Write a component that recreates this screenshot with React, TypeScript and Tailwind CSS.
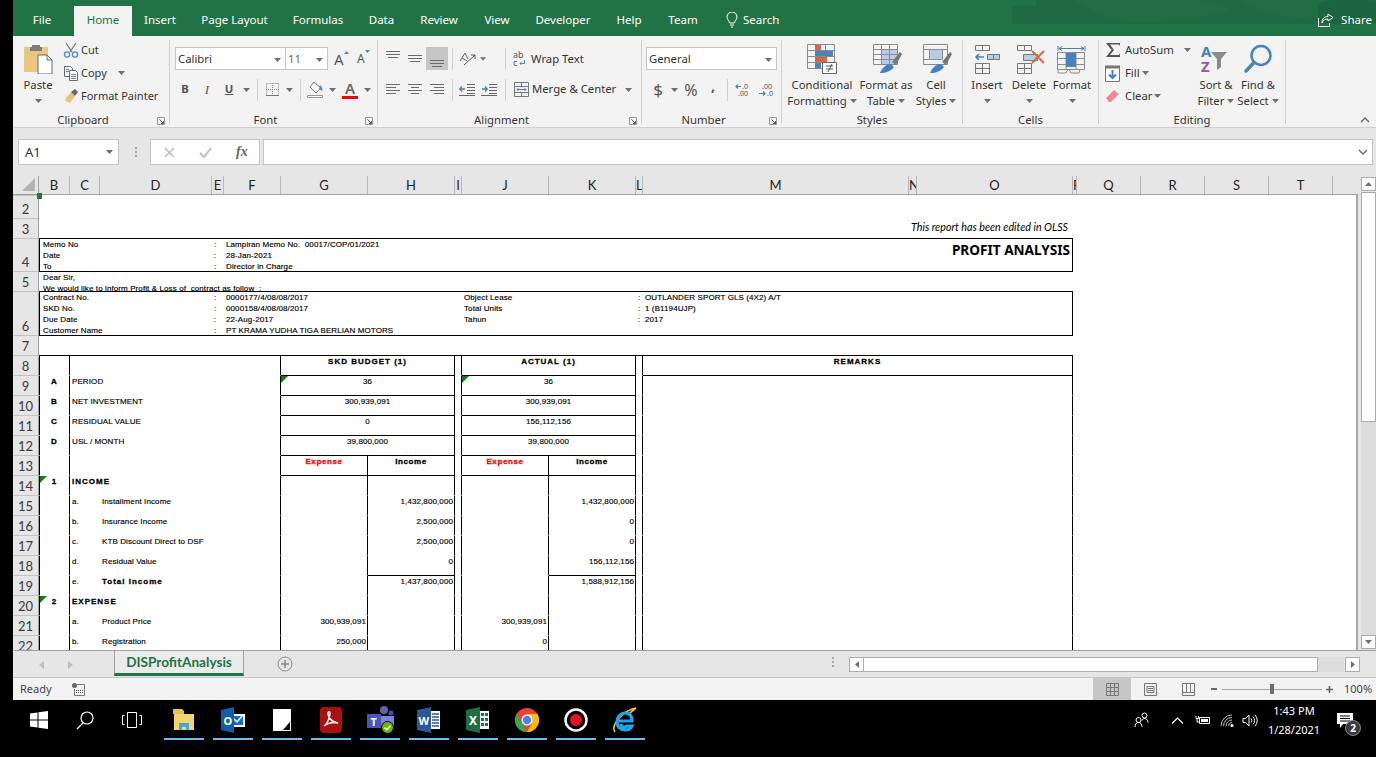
import React from 'react';

type Kids = { children?: React.ReactNode; className?: string };

const Caret = ({ className = '' }: { className?: string }) => (
  <svg width="7" height="4" viewBox="0 0 7 4" className={className}>
    <path d="M0 0h7L3.5 4z" fill="#6e6e6e" />
  </svg>
);

const Sep = ({ className = '' }: { className?: string }) => (
  <div className={`flex justify-center ${className}`}>
    <div className="h-[22px] w-px bg-[#d0d0d0]" />
  </div>
);

const Launcher = () => (
  <svg width="8" height="8" viewBox="0 0 8 8">
    <path d="M.5.5h7v7h-7z" fill="none" stroke="#9a9a9a" />
    <path d="M2.5 2.5l4 4M6.5 4v2.5H4" fill="none" stroke="#555" />
  </svg>
);

const Group = ({ className = '', label, launcher, children }: Kids & { label: string; launcher?: boolean }) => (
  <div className={`mt-[4px] flex h-[84px] flex-col border-r border-[#d0d0d0] ${className}`}>
    <div className="h-[72px]">{children}</div>
    <div className="flex h-[12px] items-start leading-[16px]">
      <div className="flex-1 text-center">{label}</div>
      {launcher && (
        <div className="flex h-[16px] w-[16px] items-center justify-center pt-[2px]">
          <Launcher />
        </div>
      )}
    </div>
  </div>
);

const Big = ({ className = '', icon, a, b }: { className?: string; icon: React.ReactNode; a: string; b?: string }) => (
  <div className={`flex flex-col items-center pt-[4px] ${className}`}>
    <div className="flex h-[30px] items-center justify-center">{icon}</div>
    <div className="mt-[3px] whitespace-nowrap leading-[16px]">{a}</div>
    <div className="flex h-[16px] items-center gap-[3px] whitespace-nowrap leading-[16px]">
      {b && <span>{b}</span>}
      <Caret />
    </div>
  </div>
);

const Lines = ({ rows, color = '#6a6a6a' }: { rows: number[][]; color?: string }) => (
  <svg width="22" height="23" viewBox="0 0 22 23">
    {rows.map((r, i) => (
      <path key={i} d={`M${r[0]} ${r[2]}.5H${r[1]}`} stroke={color} fill="none" />
    ))}
  </svg>
);

const Ribbon = () => (
  <div className="flex h-[92px] border-b border-[#d0d0d0] bg-[#f3f3f3] text-[11.3px] text-[#333]">
    <Group className="w-[157px]" label="Clipboard" launcher>
      <div className="flex">
        <div className="ml-[8px] flex w-[34px] flex-col items-center pt-[4px]">
          <svg width="30" height="30" viewBox="0 0 30 30">
            <path d="M1 3h24v25H1z" fill="#e9c781" />
            <path d="M9 3V1h8v2h2v4H7V3z" fill="#7d7d7d" />
            <path d="M15 11h9l5 5v14H15z" fill="#fff" stroke="#6a6a6a" />
            <path d="M24 11v5h5" fill="none" stroke="#6a6a6a" />
          </svg>
          <div className="mt-[3px] leading-[16px]">Paste</div>
          <div className="flex h-[16px] items-center">
            <Caret />
          </div>
        </div>
        <div className="ml-[8px] flex flex-col gap-[3px] text-[11px]">
          <div className="flex h-[20px] items-center gap-[2px]">
            <svg width="16" height="16" viewBox="0 0 16 16" fill="none">
              <path d="M3 1l6 9M13 1L7 10" stroke="#777" strokeWidth="1.3" />
              <circle cx="4" cy="12.5" r="2.6" stroke="#4c8bc8" strokeWidth="1.3" />
              <circle cx="12" cy="12.5" r="2.6" stroke="#4c8bc8" strokeWidth="1.3" />
            </svg>
            <span>Cut</span>
          </div>
          <div className="flex h-[20px] items-center gap-[2px]">
            <svg width="16" height="16" viewBox="0 0 16 16" fill="none" stroke="#6a6a6a">
              <path d="M1.5 1.5h6l2 2v8h-8z" fill="#f3f3f3" />
              <path d="M6.5 5.5h6l2 2v8h-8z" fill="#fff" />
              <path d="M8 9.5h5M8 11.5h5M8 13.5h5M3 4.5h3M3 6.5h3" stroke="#4c8bc8" />
            </svg>
            <span>Copy</span>
            <Caret className="ml-[9px]" />
          </div>
          <div className="flex h-[20px] items-center gap-[2px]">
            <svg width="16" height="16" viewBox="0 0 16 16">
              <path d="M8 4l4 4-5 7-6-3 3-1-2-1 3-2z" fill="#e5c27a" />
              <path d="M8 4l4-3 3 3-3 4z" fill="#666" />
            </svg>
            <span>Format Painter</span>
          </div>
        </div>
      </div>
    </Group>

    <Group className="w-[208px]" label="Font" launcher>
      <div className="ml-[5px] mt-[7px] flex h-[23px] items-center">
        <div className="flex h-[23px] w-[111px] items-center justify-between border border-[#c6c6c6] bg-white pl-[2px] pr-[4px] pt-[2px]">
          <span>Calibri</span>
          <Caret />
        </div>
        <div className="-ml-px flex h-[23px] w-[43px] items-center justify-between border border-[#c6c6c6] bg-white pl-[2px] pr-[4px] pt-[2px] text-[#5b6b80]">
          <span>11</span>
          <Caret />
        </div>
        <div className="ml-[6px] flex w-[20px] items-start">
          <span className="text-[15px] leading-[18px] text-[#555]">A</span>
          <svg width="5" height="3" viewBox="0 0 5 3" className="mt-[1px]"><path d="M0 3h5L2.5 0z" fill="#4c8bc8" /></svg>
        </div>
        <div className="ml-[3px] flex w-[18px] items-start">
          <span className="pt-[1px] text-[12px] leading-[18px] text-[#555]">A</span>
          <svg width="5" height="3" viewBox="0 0 5 3" className="mt-[1px]"><path d="M0 0h5L2.5 3z" fill="#4c8bc8" /></svg>
        </div>
      </div>
      <div className="ml-[4px] mt-[8px] flex h-[23px] items-center text-[#555]">
        <div className="w-[22px] text-center font-bold">B</div>
        <div className="w-[22px] text-center font-['Liberation_Serif'] text-[13px] italic">I</div>
        <div className="w-[22px] text-center font-bold underline">U</div>
        <div className="flex w-[12px] justify-center"><Caret /></div>
        <Sep className="w-[10px]" />
        <div className="flex w-[20px] justify-center">
          <svg width="13" height="13" viewBox="0 0 13 13" fill="none">
            <path d="M.5.5h12v12H.5zM6.5 0v13M0 6.5h13" stroke="#888" strokeDasharray="1 1" />
            <path d="M0 12.5h13" stroke="#777" />
          </svg>
        </div>
        <div className="flex w-[14px] justify-center"><Caret /></div>
        <Sep className="w-[8px]" />
        <div className="flex w-[24px] justify-center">
          <svg width="18" height="17" viewBox="0 0 18 17" fill="none">
            <path d="M7 1l7 6-5 5-6-6z" fill="#fff" stroke="#777" />
            <path d="M13 4c2 2 3 4 2 6-1-1-2-1-3-2z" fill="#4c8bc8" />
            <path d="M.5 14.5h15v2H.5z" fill="#fff" stroke="#999" />
          </svg>
        </div>
        <div className="flex w-[8px] justify-center"><Caret /></div>
        <div className="ml-[3px] flex h-[18px] w-[22px] flex-col items-center">
          <span className="h-[14px] text-[15px] font-semibold leading-[15px] text-[#666]">A</span>
          <div className="mt-[1px] h-[4px] w-[16px] bg-[#ff0000]" />
        </div>
        <div className="flex w-[12px] justify-center"><Caret /></div>
      </div>
    </Group>

    <Group className="w-[264px]" label="Alignment" launcher>
      <div className="ml-[4px] mt-[7px] flex h-[23px] items-center">
        <Lines rows={[[4, 18, 4], [4, 18, 7], [6, 16, 10]]} />
        <Lines rows={[[4, 18, 8], [4, 18, 11], [6, 16, 14]]} />
        <div className="bg-[#c6c6c6]">
          <Lines rows={[[4, 18, 13], [4, 18, 16], [6, 16, 19]]} />
        </div>
        <Sep className="w-[8px]" />
        <div className="flex w-[24px] justify-center">
          <svg width="18" height="14" viewBox="0 0 18 14" fill="none" stroke="#666">
            <path d="M1 9l5-8 3 6M3 6l5 3" />
            <path d="M5 13L16 3M12 3h4v4" stroke="#555" />
          </svg>
        </div>
        <div className="flex w-[6px] justify-center"><Caret /></div>
        <Sep className="ml-[14px] w-[10px]" />
        <div className="ml-[3px] flex h-[20px] w-[18px] items-center gap-px">
          <div className="flex flex-col text-[9px] leading-[8px] text-[#555]">
            <span>ab</span>
            <span>c</span>
          </div>
          <svg width="6" height="7" viewBox="0 0 6 7" fill="none" className="mt-[9px] -ml-[6px]">
            <path d="M5.5 0v3.500H1M2.500 2L1 3.500 2.500 5" stroke="#4c8bc8" />
          </svg>
        </div>
        <span className="pt-[2px]">Wrap Text</span>
      </div>
      <div className="ml-[4px] mt-[8px] flex h-[23px] items-center">
        <Lines rows={[[4, 18, 6], [4, 14, 9], [4, 18, 12], [4, 14, 15]]} />
        <Lines rows={[[4, 18, 6], [7, 15, 9], [4, 18, 12], [7, 15, 15]]} />
        <Lines rows={[[4, 18, 6], [8, 18, 9], [4, 18, 12], [8, 18, 15]]} />
        <Sep className="w-[8px]" />
        <div className="flex w-[22px] justify-center">
          <svg width="16" height="12" viewBox="0 0 16 12" fill="none">
            <path d="M8 .5h8M8 3.5h8M8 6.5h8M8 9.5h8M0 11.5h16" stroke="#666" />
            <path d="M6 5H1M3 2.5L.8 5 3 7.5" stroke="#3f83c4" strokeWidth="1.4" />
          </svg>
        </div>
        <div className="flex w-[22px] justify-center">
          <svg width="16" height="12" viewBox="0 0 16 12" fill="none">
            <path d="M8 .5h8M8 3.5h8M8 6.5h8M8 9.5h8M0 11.5h16" stroke="#666" />
            <path d="M1 5h5M4 2.5L6.2 5 4 7.5" stroke="#3f83c4" strokeWidth="1.4" />
          </svg>
        </div>
        <Sep className="w-[10px]" />
        <div className="ml-[1px] flex w-[20px] justify-center">
          <svg width="15" height="15" viewBox="0 0 15 15" fill="none">
            <path d="M.5.5h14v14H.5zM0 4.5h15M0 10.5h15M7.5 0v4M7.5 11v4" stroke="#777" />
            <path d="M3 7.5h9M4.5 6L3 7.5 4.5 9M10.5 6L12 7.5 10.5 9" stroke="#3f83c4" />
          </svg>
        </div>
        <span className="ml-[1px]">Merge &amp; Center</span>
        <Caret className="ml-[9px]" />
      </div>
    </Group>

    <Group className="w-[140px]" label="Number" launcher>
      <div className="ml-[4px] mt-[7px] flex h-[23px] w-[131px] items-center justify-between border border-[#c6c6c6] bg-white pl-[2px] pr-[4px] pt-[2px]">
        <span>General</span>
        <Caret />
      </div>
      <div className="ml-[4px] mt-[8px] flex h-[23px] items-center text-[#555]">
        <div className="w-[24px] text-center text-[17px]">$</div>
        <div className="flex w-[8px] justify-center"><Caret /></div>
        <div className="ml-[1px] w-[24px] text-center text-[16px]">%</div>
        <div className="w-[20px] -translate-y-[4px] text-center text-[14px] font-bold">,</div>
        <Sep className="w-[9px]" />
        <div className="flex w-[22px] justify-center">
          <svg width="16" height="14" viewBox="0 0 16 14" fill="none">
            <text x="7" y="6" fontSize="7" fontFamily="'Noto Sans', sans-serif" fill="#555">.0</text>
            <text x="3" y="13" fontSize="7" fontFamily="'Noto Sans', sans-serif" fill="#555">.00</text>
            <path d="M6 3.5H1M3 1.5L1 3.5l2 2" stroke="#3f83c4" strokeWidth="1.2" />
          </svg>
        </div>
        <div className="ml-[1px] flex w-[22px] justify-center">
          <svg width="16" height="14" viewBox="0 0 16 14" fill="none">
            <text x="4" y="6" fontSize="7" fontFamily="'Noto Sans', sans-serif" fill="#555">.00</text>
            <text x="9" y="13" fontSize="7" fontFamily="'Noto Sans', sans-serif" fill="#555">.0</text>
            <path d="M1 10.5h6M5 8.5l2 2-2 2" stroke="#3f83c4" strokeWidth="1.2" />
          </svg>
        </div>
      </div>
    </Group>

    <Group className="w-[181px]" label="Styles">
      <div className="flex">
        <Big
          className="w-[80px]"
          a="Conditional"
          b="Formatting"
          icon={
            <svg width="30" height="30" viewBox="0 0 30 30" fill="none">
              <path d="M.5.5h27v24H.5zM9.5 0v25M18.5 0v25M0 6.5h28M0 12.5h28M0 18.5h28" stroke="#8a8a8a" />
              <path d="M8 1h6v5H8z" fill="#d9683f" />
              <path d="M8 7h18v5H8z" fill="#4a82bd" />
              <path d="M8 13h12v5H8z" fill="#d9683f" />
              <path d="M8 19h6v5H8z" fill="#4a82bd" />
              <path d="M15.5 18.5h14v11h-14z" fill="#fff" stroke="#666" />
              <path d="M19 22h7M19 25h7M25 20l-4 8" stroke="#555" />
            </svg>
          }
        />
        <Big
          className="w-[48px]"
          a="Format as"
          b="Table"
          icon={
            <svg width="30" height="30" viewBox="0 0 30 30" fill="none" className="ml-[3px]">
              <path d="M8 6h16v14H8z" fill="#b7cde6" />
              <path d="M.5.5h24v20H.5zM8.5 0v21M16.5 0v21M0 5.5h25M0 10.5h25M0 15.5h25" stroke="#8a8a8a" />
              <path d="M19 18l8-10 2 2-6 11z" fill="#777" />
              <path d="M7 29c2-5 6-9 11-9l3 3c-3 4-8 6-14 6z" fill="#3f83c4" />
            </svg>
          }
        />
        <Big
          className="w-[52px]"
          a="Cell"
          b="Styles"
          icon={
            <svg width="30" height="30" viewBox="0 0 30 30" fill="none" className="ml-[3px]">
              <path d="M.5.5h24v20H.5zM0 5.5h6M19 5.5h6M0 15.5h6" stroke="#8a8a8a" />
              <path d="M6.5 5.5h13v10h-13z" fill="#b7cde6" stroke="#8a8a8a" />
              <path d="M19 18l8-10 2 2-6 11z" fill="#777" />
              <path d="M7 29c2-5 6-9 11-9l3 3c-3 4-8 6-14 6z" fill="#3f83c4" />
            </svg>
          }
        />
      </div>
    </Group>

    <Group className="w-[136px]" label="Cells">
      <div className="flex">
        <Big
          className="w-[48px]"
          a="Insert"
          icon={
            <svg width="28" height="30" viewBox="0 0 28 30" fill="none">
              <path d="M2.5 1.5h14v5h-14zM9.5 1v5M2.5 19.5h14v10h-14zM9.5 19v10M2 24.5h15" stroke="#777" />
              <path d="M14.5 10.5h12v5h-12zM20.5 10v5" fill="#b7cde6" stroke="#777" />
              <path d="M11 13H3M6 10l-3 3 3 3" stroke="#3f83c4" strokeWidth="1.6" />
            </svg>
          }
        />
        <Big
          className="w-[36px]"
          a="Delete"
          icon={
            <svg width="30" height="30" viewBox="0 0 30 30" fill="none" className="ml-[3px]">
              <path d="M1.5 1.5h14v5h-14zM8.5 1v5M1.5 19.5h14v10h-14zM8.5 19v10M1 24.5h15" stroke="#777" />
              <path d="M7.5 10.5h14v6h-14z" fill="#b7cde6" stroke="#777" />
              <path d="M16 7l12 12M28 7L16 19" stroke="#d9683f" strokeWidth="2" />
            </svg>
          }
        />
        <Big
          className="w-[50px]"
          a="Format"
          icon={
            <svg width="30" height="30" viewBox="0 0 30 30" fill="none">
              <path d="M1 2v5M28 2v5M2 4.5h25M5 2.5L2 4.5l3 2M24 2.5l3 2-3 2" stroke="#3f83c4" />
              <path d="M.5 8.5h27v17H.5zM9 9v16M19 9v16M0 14.5h28M0 20.5h28" stroke="#8a8a8a" />
              <path d="M9 9h10v14H9z" fill="#4a82bd" />
              <path d="M1 26v3h8l2-4M12 25l2 4h8l1-4" stroke="#8a8a8a" />
            </svg>
          }
        />
      </div>
    </Group>

    <Group className="w-[187px]" label="Editing">
      <div className="flex">
        <div className="flex w-[96px] flex-col gap-[3px] pl-[6px]">
          <div className="flex h-[20px] items-center">
            <svg width="16" height="16" viewBox="0 0 16 16" className="mr-[4px]"><path d="M1 1h14v3l-1-1.500H5L9 8l-4 5h9l1-1.500V15H1l5.500-7z" fill="#555" /></svg>
            <span>AutoSum</span>
            <Caret className="ml-[10px]" />
          </div>
          <div className="flex h-[20px] items-center">
            <svg width="15" height="17" viewBox="0 0 15 17" fill="none" className="mr-[5px]">
              <path d="M.5 2.500h14v14H.5z" fill="#fff" stroke="#777" />
              <path d="M0 .5h15v3H0z" fill="#777" />
              <path d="M7.500 5v8M4 9.500l3.500 3.500 3.500-3.500" stroke="#3f83c4" strokeWidth="2" />
            </svg>
            <span>Fill</span>
            <Caret className="ml-[2px]" />
          </div>
          <div className="flex h-[20px] items-center">
            <svg width="15" height="14" viewBox="0 0 15 14" className="mr-[5px]"><path d="M1 9l8-8 5 4-8 8H4z" fill="#ec8a9a" /></svg>
            <span>Clear</span>
            <Caret className="ml-[2px]" />
          </div>
        </div>
        <Big
          className="w-[42px]"
          a="Sort &"
          b="Filter"
          icon={
            <div className="flex h-[30px] w-[30px] items-start">
              <div className="flex flex-col text-[15px] font-bold leading-[15px]">
                <span className="text-[#3f83c4]">A</span>
                <span className="text-[#9257ad]">Z</span>
              </div>
              <svg width="16" height="18" viewBox="0 0 16 18" className="mt-[8px]"><path d="M0 0h16l-6 7v8l-4 3V7z" fill="#8a8a8a" /></svg>
            </div>
          }
        />
        <Big
          className="w-[42px]"
          a="Find &"
          b="Select"
          icon={
            <svg width="30" height="30" viewBox="0 0 30 30" fill="none">
              <circle cx="18" cy="11.500" r="9.500" stroke="#4a82bd" strokeWidth="2.500" />
              <path d="M11 18.500L3 27" stroke="#4a82bd" strokeWidth="3.500" strokeLinecap="round" />
            </svg>
          }
        />
      </div>
    </Group>

    <div className="flex flex-1 items-end justify-end pb-[4px] pr-[6px]">
      <svg width="10" height="6" viewBox="0 0 10 6" fill="none">
        <path d="M1 5l4-4 4 4" stroke="#666" strokeWidth="1.400" />
      </svg>
    </div>
  </div>
);

const tabs: [string, string][] = [
  ['Insert', 'w-[56px]'],
  ['Page Layout', 'w-[93px]'],
  ['Formulas', 'w-[74px]'],
  ['Data', 'w-[53px]'],
  ['Review', 'w-[62px]'],
  ['View', 'w-[54px]'],
  ['Developer', 'w-[78px]'],
  ['Help', 'w-[54px]'],
  ['Team', 'w-[54px]'],
];

const TitleBar = () => (
  <div className="relative flex h-[36px] items-end bg-[#217346] text-[11.5px] text-white">
    <svg width="364" height="36" viewBox="0 0 364 36" className="absolute right-0 top-0">
      <path d="M0 6h24V0h340v24H0z" fill="#1f6a42" />
      <path d="M60 0c20 10 30 18 60 22 20 2 40-4 60-2l40-10-30-10zM230 0c10 14 50 20 90 18l10-18z" fill="#216e44" />
      <path d="M306 4c10-6 40-6 58-2v20c-20 4-50 4-58-2z" fill="#1c6540" />
    </svg>
    <div className="relative flex h-[30px] items-center">
      <div className="flex h-[30px] w-[61px] items-center justify-center pb-[2px] pr-[3px]">File</div>
      <div className="flex h-[30px] w-[58px] items-center justify-center bg-[#f3f3f3] pb-[2px] text-[#217346]">Home</div>
      {tabs.map(([t, c]) => (
        <div key={t} className={`flex h-[30px] items-center justify-center pb-[2px] ${c}`}>{t}</div>
      ))}
      <div className="flex h-[30px] items-center gap-[5px] pb-[2px] pl-[16px]">
        <svg width="12" height="16" viewBox="0 0 12 16" fill="none" stroke="#fff">
          <path d="M3.500 11c0-2-2.500-3.500-2.500-6a5 5 0 0 1 10 0c0 2.500-2.500 4-2.500 6zM4 13h4M5 15h2" />
        </svg>
        <span>Search</span>
      </div>
    </div>
    <div className="relative ml-auto flex h-[30px] items-center gap-[7px] pb-[2px] pr-[4px]">
      <svg width="16" height="14" viewBox="0 0 16 14" fill="none" stroke="#fff">
        <path d="M.5 5v8.500h11V10" />
        <path d="M15 4.500L10 1v2.500C6 3.500 4 6 4 10c1-3 3-4 6-4v2z" />
      </svg>
      <span>Share</span>
    </div>
  </div>
);

const FormulaBar = () => (
  <div className="flex h-[48px] items-start bg-[#e6e6e6] pt-[11px] text-[13px] text-[#333]">
    <div className="ml-[5px] flex h-[26px] w-[101px] items-center justify-between border border-[#c6c6c6] bg-white pl-[6px] pr-[5px] leading-none">
      <span>A1</span>
      <Caret />
    </div>
    <div className="ml-[15px] flex h-[26px] w-[3px] flex-col items-center justify-center gap-[2px]">
      <div className="h-[2px] w-[2px] bg-[#a8a8a8]" />
      <div className="h-[2px] w-[2px] bg-[#a8a8a8]" />
      <div className="h-[2px] w-[2px] bg-[#a8a8a8]" />
    </div>
    <div className="ml-[13px] flex h-[26px] w-[110px] items-center border border-[#c6c6c6] bg-white">
      <svg width="11" height="11" viewBox="0 0 11 11" className="ml-[13px]" fill="none"><path d="M1 1l9 9M10 1l-9 9" stroke="#bdbdbd" strokeWidth="1.600" /></svg>
      <svg width="13" height="11" viewBox="0 0 13 11" className="ml-[24px]" fill="none"><path d="M1 6l4 4 7-9" stroke="#bdbdbd" strokeWidth="2" /></svg>
      <span className="ml-[24px] font-['Liberation_Serif'] text-[14px] font-bold italic leading-none text-[#666]">fx</span>
    </div>
    <div className="ml-[3px] flex h-[26px] w-[1110px] items-center justify-end border border-[#c6c6c6] bg-white pr-[4px]">
      <svg width="10" height="6" viewBox="0 0 10 6" fill="none"><path d="M1 1l4 4 4-4" stroke="#666" strokeWidth="1.400" /></svg>
    </div>
  </div>
);

const colWidths = [
  'w-[26px]', 'w-[31px]', 'w-[30px]', 'w-[112px]', 'w-[12px]', 'w-[57px]', 'w-[87px]', 'w-[87px]', 'w-[7px]', 'w-[87px]', 'w-[87px]',
  'w-[7px]', 'w-[266px]', 'w-[8px]', 'w-[156px]', 'w-[4px]', 'w-[64px]', 'w-[64px]', 'w-[64px]', 'w-[64px]', 'w-[25px]',
];
const letters = ['B', 'C', 'D', 'E', 'F', 'G', 'H', 'I', 'J', 'K', 'L', 'M', 'N', 'O', 'P', 'Q', 'R', 'S', 'T'];

const Tri = () => (
  <svg width="7" height="7" viewBox="0 0 7 7" className="absolute left-0 top-0">
    <path d="M0 0h7L0 7z" fill="#107c10" />
  </svg>
);

type CellProps = Kids & { t?: boolean; l?: boolean; r?: boolean; span?: number; tri?: boolean };
const Cell = ({ t, l, r, span, tri, className = '', children }: CellProps) => (
  <td
    colSpan={span}
    className={`relative overflow-visible border-t p-0 align-top ${t ? 'border-t-black' : 'border-t-transparent'} ${l ? 'border-l border-l-black' : ''} ${r ? 'border-r border-r-black' : ''} ${className}`}
  >
    {tri && <Tri />}
    {children}
  </td>
);

const Row = ({ n, className, children }: Kids & { n: number }) => (
  <tr className={className}>
    <th className="border-r border-t border-r-[#a0a0a0] border-t-[#c2c2c2] bg-[#e6e6e6] p-0 text-center align-bottom font-['Lato'] text-[13px] font-normal leading-[18px] tracking-normal text-[#3a3a3a] [-webkit-text-stroke:0px]">
      {n}
    </th>
    {children}
    <td colSpan={6} className="border-r-2 border-r-[#a8a8a8] p-0" />
  </tr>
);

const Lined = ({ lines, className = '' }: { lines: string[]; className?: string }) => (
  <div className={className}>
    {lines.map((x, i) => (
      <div key={i}>{x}</div>
    ))}
  </div>
);

const bold = 'font-bold tracking-[1px] [-webkit-text-stroke:0.3px]';

const Period = ({ n, tag, label, a, b, first }: { n: number; tag: string; label: string; a: string; b: string; first?: boolean }) => (
  <Row n={n} className="h-[20px]">
    <Cell l r className={`text-center ${bold}`}>{tag}</Cell>
    <Cell r span={4} className="pl-[2px]">{label}</Cell>
    <Cell t r span={2} tri={first} className="text-center">{a}</Cell>
    <Cell r />
    <Cell t r span={2} tri={first} className="text-center">{b}</Cell>
    <Cell r />
    <Cell t={first} r span={3} />
  </Row>
);

const Line = ({ n, tag, name, g, h, j, k, total }: { n: number; tag: string; name: string; g?: string; h?: string; j?: string; k?: string; total?: boolean }) => (
  <Row n={n} className="h-[20px]">
    <Cell l r />
    <Cell className="pl-[2px]">{tag}</Cell>
    <Cell r span={3} className={`pl-[2px] ${total ? bold : ''}`}>{name}</Cell>
    <Cell r className="pr-[1px] text-right">{g}</Cell>
    <Cell t={total} r className="pr-[1px] text-right">{h}</Cell>
    <Cell r />
    <Cell r className="pr-[1px] text-right">{j}</Cell>
    <Cell t={total} r className="pr-[1px] text-right">{k}</Cell>
    <Cell r />
    <Cell r span={3} />
  </Row>
);

const Heading = ({ n, tag, name, top }: { n: number; tag: string; name: string; top?: boolean }) => (
  <Row n={n} className="h-[20px]">
    <Cell l r tri className={`text-center ${bold}`}>{tag}</Cell>
    <Cell r span={4} className={`pl-[2px] ${bold}`}>{name}</Cell>
    <Cell t={top} r />
    <Cell t={top} r />
    <Cell r />
    <Cell t={top} r />
    <Cell t={top} r />
    <Cell r />
    <Cell r span={3} />
  </Row>
);

const Sheet = () => (
  <div className="flex h-[474px]">
    <div className="relative h-[474px] w-[1345px] overflow-hidden bg-white">
      <table className="w-[1345px] table-fixed border-separate border-spacing-0 whitespace-pre font-['Liberation_Sans'] text-[8px] leading-[11px] tracking-[0.1px] text-black [-webkit-text-stroke:0.15px]">
        <colgroup>
          {colWidths.map((w, i) => (
            <col key={i} className={w} />
          ))}
        </colgroup>
        <thead>
          <tr className="h-[19px]">
            <th className="relative border-b border-r border-b-[#a0a0a0] border-r-[#a0a0a0] bg-[#e6e6e6] p-0">
              <svg width="13" height="13" viewBox="0 0 13 13" className="absolute right-[3px] top-[2px]">
                <path d="M13 0v13H0z" fill="#b4b4b4" />
              </svg>
            </th>
            {letters.map((c) => (
              <th key={c} className="overflow-hidden border-b border-r border-b-[#a0a0a0] border-r-[#b8b8b8] bg-[#e6e6e6] p-0 text-center font-['Lato'] text-[13px] font-normal leading-[18px] tracking-normal text-[#222] [-webkit-text-stroke:0px]">
                {c}
              </th>
            ))}
            <th className="border-b border-b-[#a0a0a0] bg-[#e6e6e6] p-0" />
          </tr>
        </thead>
        <tbody>
          <Row n={2} className="h-[23px]"><Cell span={14} /></Row>
          <Row n={3} className="h-[20px]">
            <Cell span={14} className="pr-[5px] text-right font-['Lato'] text-[10.7px] italic leading-[15px] tracking-normal [-webkit-text-stroke:0px]">
              This report has been edited in OLSS
            </Cell>
          </Row>
          <Row n={4} className="h-[33px]">
            <Cell t l span={3} className="pl-[3px]">
              <Lined lines={['Memo No', 'Date', 'To']} className="h-[32px] overflow-hidden" />
            </Cell>
            <Cell t className="pl-[2px]"><Lined lines={[':', ':', ':']} className="h-[32px] overflow-hidden" /></Cell>
            <Cell t span={9} className="pl-[2px]">
              <Lined lines={['Lampiran Memo No.  00017/COP/01/2021', '28-Jan-2021', 'Director in Charge']} className="h-[32px] overflow-hidden" />
            </Cell>
            <Cell t r className="pr-[2px] text-right font-['Noto_Sans'] text-[13.6px] font-bold leading-[22px] tracking-normal [-webkit-text-stroke:0px]">
              PROFIT ANALYSIS
            </Cell>
          </Row>
          <Row n={5} className="h-[20px]">
            <Cell t span={14} className="pl-[4px]">
              <Lined lines={['Dear Sir,', 'We would like to inform Profit & Loss of  contract as follow  :']} className="h-[19px] overflow-hidden" />
            </Cell>
          </Row>
          <Row n={6} className="h-[44px]">
            <Cell t l span={3} className="pl-[3px]">
              <Lined lines={['Contract No.', 'SKD No.', 'Due Date', 'Customer Name']} className="h-[43px] overflow-hidden" />
            </Cell>
            <Cell t className="pl-[2px]"><Lined lines={[':', ':', ':', ':']} className="h-[43px] overflow-hidden" /></Cell>
            <Cell t span={4} className="pl-[2px]">
              <Lined lines={['0000177/4/08/08/2017', '0000158/4/08/08/2017', '22-Aug-2017', 'PT KRAMA YUDHA TIGA BERLIAN MOTORS']} className="h-[43px] overflow-hidden" />
            </Cell>
            <Cell t span={2} className="pl-[2px]">
              <Lined lines={['Object Lease', 'Total Units', 'Tahun']} className="h-[43px] overflow-hidden" />
            </Cell>
            <Cell t className="pl-[2px]"><Lined lines={[':', ':', ':']} className="h-[43px] overflow-hidden" /></Cell>
            <Cell t r span={3} className="pl-[2px]">
              <Lined lines={['OUTLANDER SPORT GLS (4X2) A/T', '1 (B1194UJP)', '2017']} className="h-[43px] overflow-hidden" />
            </Cell>
          </Row>
          <Row n={7} className="h-[20px]"><Cell t span={14} /></Row>
          <Row n={8} className="h-[20px]">
            <Cell t l r />
            <Cell t r span={4} />
            <Cell t r span={2} className={`text-center ${bold}`}>SKD BUDGET (1)</Cell>
            <Cell t r />
            <Cell t r span={2} className={`text-center ${bold}`}>ACTUAL (1)</Cell>
            <Cell t r />
            <Cell t r span={3} className={`text-center ${bold}`}>REMARKS</Cell>
          </Row>
          <Period n={9} tag="A" label="PERIOD" a="36" b="36" first />
          <Period n={10} tag="B" label="NET INVESTMENT" a="300,939,091" b="300,939,091" />
          <Period n={11} tag="C" label="RESIDUAL VALUE" a="0" b="156,112,156" />
          <Period n={12} tag="D" label="USL / MONTH" a="39,800,000" b="39,800,000" />
          <Row n={13} className="h-[20px]">
            <Cell l r />
            <Cell r span={4} />
            <Cell t r className="text-center font-bold tracking-[0.6px] text-[#ff0000] [-webkit-text-stroke:0.3px]">Expense</Cell>
            <Cell t r className="text-center font-bold tracking-[0.6px] [-webkit-text-stroke:0.3px]">Income</Cell>
            <Cell r />
            <Cell t r className="text-center font-bold tracking-[0.6px] text-[#ff0000] [-webkit-text-stroke:0.3px]">Expense</Cell>
            <Cell t r className="text-center font-bold tracking-[0.6px] [-webkit-text-stroke:0.3px]">Income</Cell>
            <Cell r />
            <Cell r span={3} />
          </Row>
          <Heading n={14} tag="1" name="INCOME" top />
          <Line n={15} tag="a." name="Installment Income" h="1,432,800,000" k="1,432,800,000" />
          <Line n={16} tag="b." name="Insurance Income" h="2,500,000" k="0" />
          <Line n={17} tag="c." name="KTB Discount Direct to DSF" h="2,500,000" k="0" />
          <Line n={18} tag="d." name="Residual Value" h="0" k="156,112,156" />
          <Line n={19} tag="e." name="Total Income" h="1,437,800,000" k="1,588,912,156" total />
          <Heading n={20} tag="2" name="EXPENSE" />
          <Line n={21} tag="a." name="Product Price" g="300,939,091" j="300,939,091" />
          <Line n={22} tag="b." name="Registration" g="250,000" j="0" />
        </tbody>
      </table>
      <div className="absolute left-[24px] top-[17px] h-[6px] w-[5px] bg-[#217346]" />
    </div>
    <div className="flex w-[18px] flex-col bg-[#e6e6e6] pb-px pl-[3px] pt-px">
      <div className="flex h-[14px] w-[15px] items-center justify-center border border-[#ababab] bg-white">
        <svg width="7" height="4" viewBox="0 0 7 4"><path d="M0 4h7L3.500 0z" fill="#6e6e6e" /></svg>
      </div>
      <div className="mt-px h-[230px] w-[15px] border border-[#ababab] bg-white" />
      <div className="w-[15px] flex-1 bg-[#dcdcdc]" />
      <div className="flex h-[14px] w-[15px] items-center justify-center border border-[#ababab] bg-white">
        <Caret />
      </div>
    </div>
  </div>
);

const SheetTabs = () => (
  <div className="flex h-[28px] items-start border-b border-t border-b-[#c6c6c6] border-t-[#a0a0a0] bg-[#e6e6e6]">
    <div className="ml-[26px] mt-[10px] flex gap-[22px]">
      <svg width="6" height="8" viewBox="0 0 6 8"><path d="M5 0v8L0 4z" fill="#c0c0c0" /></svg>
      <svg width="6" height="8" viewBox="0 0 6 8"><path d="M1 0v8l5-4z" fill="#c0c0c0" /></svg>
    </div>
    <div className="ml-[41px] flex h-[25px] w-[130px] items-center justify-center border-x border-b-[3px] border-x-[#a0a0a0] border-b-[#217346] bg-[#ebebeb] pt-[1px] font-['Lato'] text-[13.6px] font-bold text-[#217346]">
      DISProfitAnalysis
    </div>
    <svg width="16" height="16" viewBox="0 0 16 16" className="ml-[33px] mt-[5px]" fill="none">
      <circle cx="8" cy="8" r="7" stroke="#8a8a8a" />
      <path d="M8 4v8M4 8h8" stroke="#8a8a8a" strokeWidth="1.500" />
    </svg>
    <div className="ml-[539px] mt-[6px] flex flex-col gap-[2px]">
      <div className="h-[2px] w-[2px] bg-[#a8a8a8]" />
      <div className="h-[2px] w-[2px] bg-[#a8a8a8]" />
      <div className="h-[2px] w-[2px] bg-[#a8a8a8]" />
    </div>
    <div className="ml-[15px] mt-[6px] flex h-[15px]">
      <div className="flex h-[15px] w-[15px] items-center justify-center border border-[#ababab] bg-white">
        <svg width="4" height="7" viewBox="0 0 4 7"><path d="M4 0v7L0 3.500z" fill="#6e6e6e" /></svg>
      </div>
      <div className="h-[15px] w-[454px] border-y border-r border-[#ababab] bg-white" />
      <div className="h-[15px] w-[26px] bg-[#dcdcdc]" />
      <div className="ml-px flex h-[15px] w-[15px] items-center justify-center border border-[#ababab] bg-white">
        <svg width="4" height="7" viewBox="0 0 4 7"><path d="M0 0v7l4-3.500z" fill="#6e6e6e" /></svg>
      </div>
    </div>
  </div>
);

const StatusBar = () => (
  <div className="flex h-[22px] items-center bg-[#f3f3f3] pr-[5px] text-[11px] text-[#444]">
    <span className="ml-[7px]">Ready</span>
    <svg width="13" height="13" viewBox="0 0 13 13" className="ml-[20px]" fill="none">
      <circle cx="2.500" cy="2.500" r="2.500" fill="#666" />
      <path d="M5 1.500h7.500v11h-10V6" stroke="#777" />
      <path d="M4 7.500h1M6 7.500h1M8 7.500h1M10 7.500h1M4 9.500h1M6 9.500h1M8 9.500h1M10 9.500h1" stroke="#555" />
    </svg>
    <div className="ml-auto flex h-[22px] items-center">
      <div className="flex h-[22px] w-[38px] items-center justify-center bg-[#c6c6c6]">
        <svg width="13" height="13" viewBox="0 0 13 13" fill="none"><path d="M.5.5h12v12H.5zM4.500 0v13M8.500 0v13M0 4.500h13M0 8.500h13" stroke="#777" /></svg>
      </div>
      <div className="flex w-[38px] justify-center">
        <svg width="13" height="13" viewBox="0 0 13 13" fill="none"><path d="M.5.5h12v12H.5zM3 3.500h7v6H3zM4 5.500h5M4 7.500h5" stroke="#777" /></svg>
      </div>
      <div className="flex w-[38px] justify-center">
        <svg width="13" height="13" viewBox="0 0 13 13" fill="none"><path d="M.5.5h12v12H.5zM.5 9.500h12M4.500 1v8M8.500 1v8" stroke="#777" /></svg>
      </div>
      <div className="ml-[4px] h-[2px] w-[6px] bg-[#666]" />
      <div className="relative ml-[5px] flex h-[14px] w-[100px] items-center justify-center">
        <div className="h-px w-[100px] bg-[#a8a8a8]" />
        <div className="absolute left-[48px] top-[2px] h-[10px] w-[4px] bg-[#6e6e6e]" />
      </div>
      <svg width="7" height="7" viewBox="0 0 7 7" className="ml-[4px]" fill="none"><path d="M3.500 0v7M0 3.500h7" stroke="#666" strokeWidth="1.600" /></svg>
      <span className="ml-[11px] w-[27px] whitespace-nowrap">100%</span>
    </div>
  </div>
);

const apps: React.ReactNode[] = [
  <svg key="e" width="24" height="24" viewBox="0 0 24 24">
    <path d="M2 4h8l2 2h10v16H2z" fill="#f6d36a" />
    <path d="M1 1h9l2 2v3H1z" fill="#e8bf51" />
    <path d="M7 15h10v7h-3v-3h-4v3H7z" fill="#3fa9e8" />
  </svg>,
  <svg key="o" width="24" height="26" viewBox="0 0 24 26">
    <path d="M10 7h14v13H10z" fill="#fff" />
    <path d="M12 9h10v9H12z" fill="#0f6dbf" />
    <path d="M13 12l3 3 5-6" fill="none" stroke="#fff" strokeWidth="1.500" />
    <path d="M0 3l13-3v26L0 23z" fill="#0e5fa8" />
    <text x="2.500" y="17.500" fontSize="11" fontWeight="700" fontFamily="'Noto Sans', sans-serif" fill="#fff">O</text>
  </svg>,
  <svg key="s" width="18" height="22" viewBox="0 0 18 22">
    <path d="M0 0h18v12l-9 10H0z" fill="#fff" />
    <path d="M9 22l9-10v10z" fill="#fff" />
    <path d="M10 21l7-8v8z" fill="#000" />
  </svg>,
  <svg key="a" width="22" height="26" viewBox="0 0 22 26">
    <rect x="0" y="0" width="22" height="26" rx="4" fill="#a91111" />
    <path d="M4 19c3-2 5-6 6-12 0-3-2-3-2 0 1 5 4 8 10 9-5-1-10 0-14 3z" fill="none" stroke="#fff" strokeWidth="1.500" />
  </svg>,
  <svg key="t" width="28" height="28" viewBox="0 0 28 28">
    <circle cx="18" cy="4" r="4" fill="#6264a7" />
    <circle cx="25" cy="7" r="2.500" fill="#464eb8" />
    <path d="M13 10h15v10H13z" fill="#7b83eb" />
    <rect x="1" y="8" width="14" height="14" fill="#4b53bc" />
    <text x="4.500" y="19.500" fontSize="11" fontWeight="700" fontFamily="'Noto Sans', sans-serif" fill="#fff">T</text>
    <circle cx="21.500" cy="21.500" r="6" fill="#6bb700" stroke="#000" />
    <path d="M18.500 21.500l2.200 2.200 3.800-4" stroke="#fff" strokeWidth="1.400" fill="none" />
  </svg>,
  <svg key="w" width="24" height="26" viewBox="0 0 24 26">
    <path d="M14 4h9v18h-9z" fill="#fff" />
    <path d="M15 7h7M15 10h7M15 13h7M15 16h7M15 19h7" stroke="#2b579a" strokeWidth="1.500" />
    <path d="M0 3l14-3v26L0 23z" fill="#2b579a" />
    <text x="1.500" y="18" fontSize="11" fontWeight="700" fontFamily="'Noto Sans', sans-serif" fill="#fff">W</text>
  </svg>,
  <svg key="x" width="24" height="26" viewBox="0 0 24 26">
    <path d="M14 4h9v18h-9z" fill="#fff" />
    <path d="M15 6h3v3h-3zM19 6h3v3h-3zM15 11h3v3h-3zM19 11h3v3h-3zM15 16h3v3h-3zM19 16h3v3h-3z" fill="#217346" />
    <path d="M0 3l14-3v26L0 23z" fill="#1e6e42" />
    <text x="3" y="18" fontSize="12" fontWeight="700" fontFamily="'Noto Sans', sans-serif" fill="#fff">X</text>
  </svg>,
  <svg key="c" width="24" height="24" viewBox="0 0 24 24">
    <circle cx="12" cy="12" r="12" fill="#ea4335" />
    <path d="M12 24A12 12 0 0 1 1.600 6l6 10.500z" fill="#34a853" />
    <path d="M12 24A12 12 0 0 0 22.400 6H12l4.500 10z" fill="#fbbc05" />
    <circle cx="12" cy="12" r="5.500" fill="#fff" />
    <circle cx="12" cy="12" r="4.200" fill="#4285f4" />
  </svg>,
  <svg key="r" width="24" height="24" viewBox="0 0 24 24">
    <circle cx="12" cy="12" r="10.500" fill="none" stroke="#fff" strokeWidth="2.500" />
    <circle cx="12" cy="12" r="6" fill="#e81123" />
  </svg>,
  <svg key="i" width="26" height="26" viewBox="0 0 26 26" fill="none">
    <path d="M3 25C-2 18 12 3 24 1c-4 3-6 5-8 7" stroke="#f2c230" strokeWidth="1.600" />
    <path d="M5 14h15c0-6-3-8-7-8s-8 4-8 9 4 8 8 8 6-2 7-4h-5c-1 1-2 1-3 1-2 0-3-2-3-3" stroke="#1ea7e8" strokeWidth="3.200" />
  </svg>,
];

const Taskbar = () => (
  <div className="flex h-[57px] bg-black pl-[16px] text-[11px] text-white">
    <div className="flex h-[40px] w-[46px] items-center justify-center">
      <svg width="18" height="18" viewBox="0 0 18 18"><path d="M0 2.500l7.500-1v7H0zM8.500 1.300L18 0v8.500H8.500zM0 9.500h7.500v7L0 15.500zM8.500 9.500H18V18l-9.500-1.300z" fill="#fff" /></svg>
    </div>
    <div className="flex h-[40px] w-[46px] items-center justify-center">
      <svg width="18" height="19" viewBox="0 0 18 19" fill="none" stroke="#fff" strokeWidth="1.200"><circle cx="11" cy="7" r="6" /><path d="M7 12l-6 6" /></svg>
    </div>
    <div className="flex h-[40px] w-[46px] items-center justify-center pl-[1px]">
      <svg width="20" height="16" viewBox="0 0 20 16" fill="none" stroke="#fff"><path d="M5.500.5h9v15h-9zM2.500 3.500H.5v9h2M17.500 3.500h2v9h-2" /></svg>
    </div>
    <div className="ml-[5px] flex">
      {apps.map((a, i) => (
        <div key={i} className="flex w-[49px] flex-col items-center">
          <div className="flex h-[38px] w-[40px] items-center justify-center pt-[2px]">{a}</div>
          <div className="h-[2px] w-[40px] bg-[#76b9ed]" />
        </div>
      ))}
    </div>
    <div className="ml-[476px] flex h-[40px] w-[34px] items-center justify-center">
      <svg width="16" height="16" viewBox="0 0 16 16" fill="none" stroke="#fff">
        <circle cx="4.500" cy="8" r="2.500" /><circle cx="10.500" cy="3.500" r="2.500" /><path d="M1 15c0-3 1.500-4.500 3.500-4.500S8 12 8 15M8 8.500c.7-1.500 1.500-2 2.500-2 2 0 3.500 1.500 3.500 4" />
      </svg>
    </div>
    <div className="ml-[11px] flex h-[40px] w-[14px] items-center justify-center">
      <svg width="13" height="7" viewBox="0 0 13 7" fill="none" stroke="#fff" strokeWidth="1.200"><path d="M1 6.500L6.500 1 12 6.500" /></svg>
    </div>
    <div className="ml-[10px] flex h-[40px] w-[18px] items-center justify-center">
      <svg width="16" height="10" viewBox="0 0 16 10" fill="none" stroke="#fff"><path d="M4.500 2.500h10v6h-10z" /><path d="M6 4h7v3H6z" fill="#fff" stroke="none" /><path d="M1 1v2.500h2.500V1M2 4v3h3" /></svg>
    </div>
    <div className="ml-[6px] flex h-[40px] w-[18px] items-center justify-center">
      <svg width="14" height="13" viewBox="0 0 14 13" fill="none" stroke="#bfbfbf"><path d="M1 12a11 11 0 0 1 11-11M3.500 12A8.500 8.500 0 0 1 12 3.500M6 12a6 6 0 0 1 6-6M8.500 12a3.500 3.500 0 0 1 3.500-3.500" /><circle cx="12" cy="11.500" r="1.500" fill="#fff" stroke="none" /></svg>
    </div>
    <div className="ml-[5px] flex h-[40px] w-[18px] items-center justify-center">
      <svg width="16" height="13" viewBox="0 0 16 13" fill="none" stroke="#fff"><path d="M1 4.500h2.500L7 1v11L3.500 8.500H1z" /><path d="M9 4.500a3 3 0 0 1 0 4M11 2.500a6 6 0 0 1 0 8M13 .8a8.500 8.500 0 0 1 0 11.400" /></svg>
    </div>
    <div className="ml-[1px] flex h-[40px] w-[68px] flex-col items-center justify-center gap-[3px] leading-[16px]">
      <span>1:43 PM</span>
      <span>1/28/2021</span>
    </div>
    <div className="relative ml-[5px] flex h-[40px] w-[24px] items-center justify-center">
      <svg width="16" height="15" viewBox="0 0 16 15"><path d="M0 0h16v11H6l-3 4v-4H0z" fill="#fff" /><path d="M3 3h10M3 5.500h10M3 8h10" stroke="#000" /></svg>
      <div className="absolute left-[12px] top-[20px] flex h-[16px] w-[16px] items-center justify-center rounded-full border border-[#888] bg-[#3a3a3a] text-[10px] font-bold leading-none">2</div>
    </div>
  </div>
);

export default function App() {
  return (
    <div className="flex h-[757px] w-[1376px] select-none flex-col overflow-hidden bg-black font-['Noto_Sans']">
      <div className="ml-[13px] flex h-[700px] flex-col">
        <TitleBar />
        <Ribbon />
        <FormulaBar />
        <Sheet />
        <SheetTabs />
        <StatusBar />
      </div>
      <Taskbar />
    </div>
  );
}
